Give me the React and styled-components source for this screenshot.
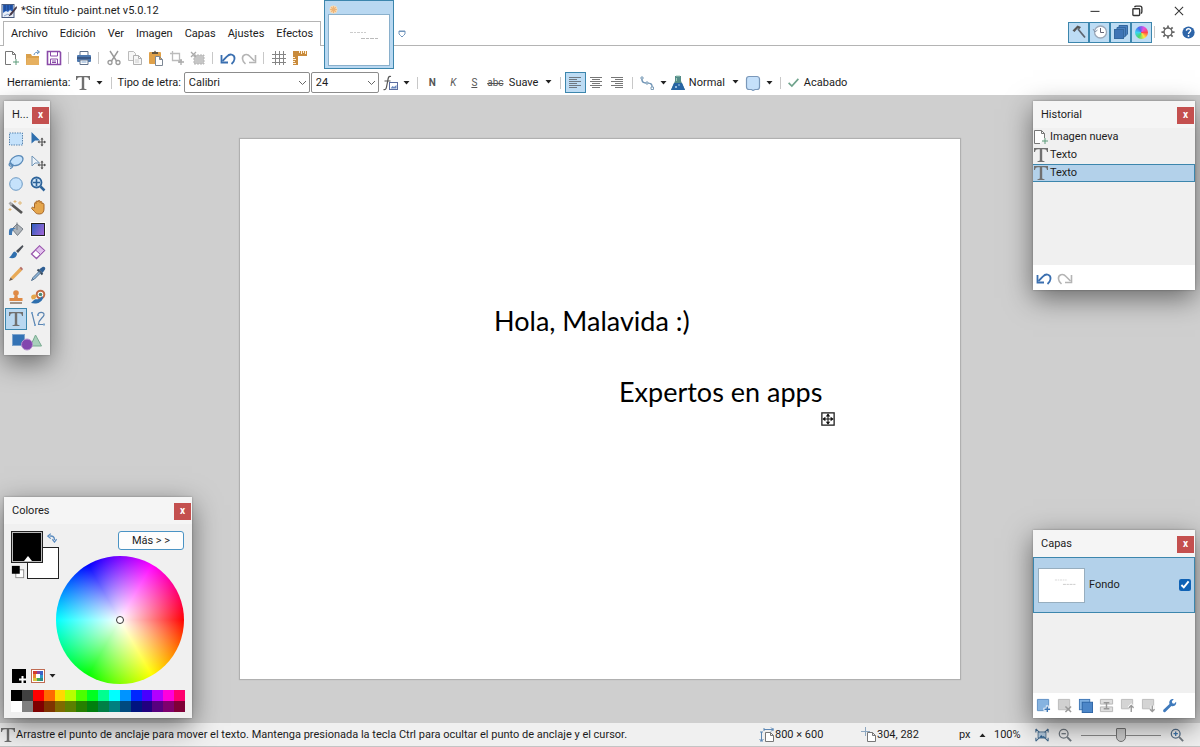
import React, { useState } from "react";
import styled, { createGlobalStyle } from "styled-components";

const GlobalStyle = createGlobalStyle`
  * {
    box-sizing: border-box;
  }
  body {
    margin: 0;
    font-family: Roboto, "Open Sans", sans-serif;
    font-size: 11px;
    line-height: 16px;
    color: #1c1c1c;
  }
  button, select, input {
    font: inherit;
    color: inherit;
    margin: 0;
  }
`;

const Icon = ({ size = 16, children }) => (
  <svg width={size} height={size} viewBox="0 0 16 16" fill="none" aria-hidden="true">
    {children}
  </svg>
);

const icons = {
  app: (
    <>
      <rect x="1" y="1.500" width="12" height="13" fill="#e8eef8" stroke="#4a5c80" />
      <path d="M2 2h10v7l-3-2-2 2-2-1-3 2z" fill="#2a60b8" />
      <path d="M4 2v6M7 2v5M10 2v4" stroke="#173e86" />
      <path d="M3 13l4-2 2 2" stroke="#8da8d0" />
      <path d="M15.500 3L9 10.500l-1.500 3 3-1.500L16 5z" fill="#46394a" />
    </>
  ),
  newFile: (
    <>
      <path d="M7 14.500H1.500v-13h7l3 3V9" fill="#fff" stroke="#777" />
      <path d="M8.500 1.500v3h3" stroke="#777" />
      <path d="M12 9v6M9 12h6" stroke="#5d9c7a" />
    </>
  ),
  open: (
    <>
      <path d="M1 4h5l1 2h7v9H1z" fill="#d9a04c" />
      <path d="M1 15l1-7h12v7z" fill="#e6b060" />
      <path d="M9 5c0-2 2-3 5-3M12 0l2.500 2L12 4" stroke="#5c8dbd" />
    </>
  ),
  save: (
    <>
      <path d="M1.500 1.500h12l1 1v12h-13z" fill="#fff" stroke="#8a4aa8" strokeWidth="1.600" />
      <path d="M4.500 2v4h7V2M4.500 14v-5h7v5M6 11h4M6 12.500h4" stroke="#8a4aa8" />
    </>
  ),
  print: (
    <>
      <path d="M4 1.500h8V6H4z" fill="#fff" stroke="#60728c" />
      <rect x="1" y="5" width="14" height="7" rx="1" fill="#4d79b0" />
      <path d="M1 8h14" stroke="#334e78" strokeWidth="1.500" />
      <path d="M4 10h8v4.500H4z" fill="#fff" stroke="#60728c" />
      <path d="M5.500 12h5" stroke="#7fa4cf" />
    </>
  ),
  cut: (
    <>
      <path d="M4 1l6.500 10M12 1L5.500 11" stroke="#999" strokeWidth="1.400" />
      <circle cx="4" cy="12.500" r="2" stroke="#999" strokeWidth="1.300" />
      <circle cx="12" cy="12.500" r="2" stroke="#999" strokeWidth="1.300" />
    </>
  ),
  copy: (
    <>
      <path d="M1.500 1.500h5l2 2v7h-7z" fill="#f7f7f7" stroke="#bbb" />
      <path d="M6.500 5.500h5l3 3v6h-8zM11.500 5.500v3h3" fill="#f7f7f7" stroke="#b0b0b0" />
      <path d="M8 10h4M8 12h4" stroke="#ccc" />
    </>
  ),
  paste: (
    <>
      <rect x="1" y="2" width="12" height="12" rx="1" fill="#dfa14a" />
      <path d="M4 4V2h2l1-1.500L8 2h2v2z" fill="#64553f" />
      <path d="M7.500 6.500h4l3 3v6h-7zM11.500 6.500v3h3" fill="#fff" stroke="#7d8794" />
    </>
  ),
  crop: (
    <>
      <path d="M3.500 1v9.500H13M1 3.500h9.500V13" stroke="#bbb" strokeWidth="1.300" />
      <path d="M12 9v6M9 12h6" stroke="#aaa" strokeWidth="1.300" />
    </>
  ),
  deselect: (
    <>
      <rect x="4" y="5" width="10" height="9" fill="#c6c6c6" stroke="#b5b5b5" strokeDasharray="2 1" />
      <path d="M1 2l5 5M6 2L1 7" stroke="#aaa" strokeWidth="1.300" />
    </>
  ),
  undo: (
    <>
      <path d="M2.500 11L7 6.500c3-3.500 8-2 7.500 2.500-.2 2-1.200 3.500-3 5" stroke="#3a6fb0" strokeWidth="1.800" />
      <path d="M1.500 5v7.500H8" stroke="#3a6fb0" strokeWidth="1.800" />
    </>
  ),
  redo: (
    <>
      <path d="M13.500 11L9 6.500C6 3 1 4.500 1.500 9c.2 2 1.200 3.500 3 5" stroke="#b4b4b4" strokeWidth="1.600" />
      <path d="M14.500 5v7.500H8" stroke="#b4b4b4" strokeWidth="1.600" />
    </>
  ),
  grid: <path d="M4.500 1v14M8.500 1v14M12.500 1v14M1 4.500h14M1 8.500h14M1 12.500h14" stroke="#858585" />,
  ruler: (
    <>
      <path d="M1 1h14v5H6v9H1z" fill="#c98b3c" />
      <path d="M7.500 1v2M9.500 1v3M11.500 1v2M13.500 1v3M1 7.500h2M1 9.500h3M1 11.500h2M1 13.500h3" stroke="#fff0d8" />
    </>
  ),
  text: (
    <path
      d="M1 1h14v4h-1c-.3-2-1-2.700-3-2.700H9.200v10.500c0 1 .4 1.300 2.300 1.400v.8h-7v-.8c1.900-.1 2.300-.4 2.300-1.400V2.300H5C3 2.300 2.300 3 2 5H1z"
      fill="#707070"
    />
  ),
  fx: (
    <>
      <path d="M9 1.500C6.500.5 6.200 3 5.700 6L4.500 12c-.5 2.500-1.500 3-3 2.500M2.500 6h6" stroke="#555" strokeWidth="1.200" />
      <rect x="7.500" y="7.500" width="8" height="7" fill="#fff" stroke="#5b6da0" />
      <path d="M8.500 13.500l2-2.500 1.500 1 2.500-2v3.500z" fill="#6987bd" />
    </>
  ),
  left: <path d="M2 2.500h12M2 4.500h8M2 6.500h12M2 8.500h8M2 10.500h12M2 12.500h8" stroke="#6f7881" />,
  center: <path d="M2 2.500h12M4 4.500h8M2 6.500h12M4 8.500h8M2 10.500h12M4 12.500h8" stroke="#777" />,
  right: <path d="M2 2.500h12M6 4.500h8M2 6.500h12M6 8.500h8M2 10.500h12M6 12.500h8" stroke="#777" />,
  curve: (
    <>
      <path d="M3 3c-1 5 3 5 5 5s6 0 5 5" stroke="#6e93b5" strokeWidth="1.200" />
      <path d="M2 2h2v2H2zM7 7h2v2H7zM12 12h2.500v2.500H12z" fill="#fff" stroke="#7d9db8" />
    </>
  ),
  flask: (
    <>
      <path d="M5 1h6v5l4 9H1l4-9z" fill="#548c88" />
      <path d="M4 8h8l3 7H1z" fill="#2865a3" />
      <path d="M6 1h4M6.500 3v3" stroke="#9cc8b8" />
      <circle cx="6" cy="12" r="1" fill="#b7d8f2" />
      <circle cx="9" cy="10" r=".8" fill="#b7d8f2" />
    </>
  ),
  shape: (
    <path
      d="M4 1.500h8c1 0 2.500 1 2.500 2.500v8c0 1-.5 2.500-2.500 2.500h-2l-2 1-1.500-1H4C2.500 14.500 1.500 13.500 1.500 12V4c0-1.500 1-2.500 2.500-2.500z"
      fill="#c5e0fa"
      stroke="#7a98ba"
      strokeWidth="1.200"
    />
  ),
  check: <path d="M2 8.500l4 4 8-9" stroke="#6fa38c" strokeWidth="2" />,
  hammer: (
    <>
      <path d="M1.500 6.500l5-5L10 3 8.500 5 6.500 4.500 3.500 8z" fill="#555" />
      <path d="M7 5l7 8.500" stroke="#5d6570" strokeWidth="1.800" />
    </>
  ),
  clock: (
    <>
      <circle cx="8.500" cy="8" r="6" fill="#fff" stroke="#9ba7b8" strokeWidth="1.300" />
      <path d="M8.500 4v4.500H12" stroke="#667" />
      <path d="M1 5l2 3 2.500-2" stroke="#8796aa" />
    </>
  ),
  layers: (
    <>
      <path d="M6 1.500h8.500V10L12 12.500V4H6z" fill="#4b80c0" stroke="#35689f" />
      <path d="M4 3.500h8.500V12L10 14V6H4z" fill="#4b80c0" stroke="#35689f" />
      <rect x="1.500" y="5.500" width="9" height="9" fill="#3f74b5" stroke="#35689f" />
    </>
  ),
  gear: (
    <>
      <circle cx="8" cy="8" r="4.500" stroke="#666" strokeWidth="1.600" />
      <path
        d="M8 .5v3M8 12.500v3M.5 8h3M12.500 8h3M2.700 2.700l2.200 2.200M11.100 11.100l2.200 2.200M13.300 2.700l-2.200 2.200M4.900 11.100l-2.200 2.200"
        stroke="#666"
        strokeWidth="2"
      />
    </>
  ),
  help: (
    <>
      <circle cx="8" cy="8" r="6.500" fill="#2d64a8" />
      <path d="M5.800 6.200c0-3 4.500-2.800 4.500-.3C10.300 7.500 8 7.500 8 9.500" stroke="#fff" strokeWidth="1.500" />
      <circle cx="8" cy="11.700" r="1" fill="#fff" />
    </>
  ),
  rectSelect: <rect x="1.500" y="2" width="13" height="12" fill="#c5e2fb" stroke="#5b86b0" strokeDasharray="1.500 1" />,
  lasso: (
    <>
      <path
        d="M4 11C0 9 3 4.500 7 2.500s8-.5 8 2.500-3.500 6-7 6.500c-1.500.2-3 .2-4-.5z"
        fill="#c5e2fb"
        stroke="#5a8ab8"
        strokeWidth="1.300"
      />
      <path d="M4 9.500c-2-1-3.500.5-2.500 2s3.500 0 3-1.500c1 2-.5 4.500-2.500 4.500" stroke="#5a8ab8" strokeWidth="1.300" />
    </>
  ),
  ellipse: <circle cx="8" cy="8" r="6.300" fill="#c5e2fb" stroke="#6c9ac4" />,
  movePixels: (
    <>
      <path d="M1.500 1v11.500L5 9.500h5z" fill="#2e6fae" />
      <path d="M12 7.500v7M8.500 11h7" stroke="#555" strokeWidth="1.200" />
      <path d="M12 6.500l1.500 2h-3zM12 15.500l1.500-2h-3zM7.500 11l2-1.500v3zM16 11l-2-1.500v3z" fill="#555" />
    </>
  ),
  moveSel: (
    <>
      <path d="M2 2v10l3-3h4.500z" fill="#eef4fa" stroke="#6e93b5" />
      <path d="M12 7.500v7M8.500 11h7" stroke="#555" strokeWidth="1.200" />
      <path d="M12 6.500l1.500 2h-3zM12 15.500l1.500-2h-3zM7.500 11l2-1.500v3zM16 11l-2-1.500v3z" fill="#555" />
    </>
  ),
  zoom: (
    <>
      <circle cx="6.500" cy="6.500" r="5" fill="#cfe4f6" stroke="#2d6399" strokeWidth="1.800" />
      <path d="M10.500 10.500l4 4" stroke="#2d6399" strokeWidth="2.500" />
      <path d="M6.500 3v7M3 6.500h7" stroke="#2d6399" strokeWidth="1.600" />
    </>
  ),
  wand: (
    <>
      <path d="M3 5l11 9" stroke="#555" strokeWidth="2.800" />
      <path d="M1.500 3.500L4 6" stroke="#aaa" strokeWidth="2.800" />
      <path d="M7 1v3M5.500 2.500h3M12 2v4M10 4h4M2 9v3M.5 10.500h3" stroke="#dfb775" />
    </>
  ),
  hand: (
    <path
      d="M4.500 9V4.500c0-1.300 1.500-1.300 1.500 0V3c0-1.500 2-1.500 2 0V2.500c0-1.500 2-1.500 2 0V3.500c0-1.300 2-1.300 2 0v1.500c.3-1 2-.8 2 .5V10c0 3-1.500 5-4.500 5S5.500 14 4.500 12.500L1.800 9.700c-.8-1 .7-2 1.600-1.300z"
      fill="#e5a64c"
      stroke="#a8692b"
    />
  ),
  bucket: (
    <>
      <path d="M4 8l5-5 6 5-5.500 6.500z" fill="#aeb4ba" stroke="#777e86" />
      <path d="M9 9V1.500" stroke="#777e86" />
      <path d="M1 14c0-4-.5-7 3-7h4c-3 1-4 3-4 7z" fill="#3e78b4" />
    </>
  ),
  brush: (
    <>
      <path d="M14.500 1L8 7l2 2 5.500-6.500z" fill="#4b5058" />
      <path d="M7 7.500c-3 .5-2.500 4-6 6 3.500 1.500 8 .5 8-4z" fill="#2f6fae" />
    </>
  ),
  eraser: (
    <>
      <path d="M1.500 10L9.500 2l5 4.500-8 8z" fill="#fff" stroke="#9a58ae" strokeWidth="1.300" />
      <path d="M5.500 6l4-4 5 4.500-4 4z" fill="#e3c2ee" stroke="#9a58ae" />
    </>
  ),
  pencil: (
    <>
      <path d="M2.500 11.500l9-9.500 2.500 2.500-9 9z" fill="#e8a956" />
      <path d="M11.500 2l1.500-1.200L15 3l-1 1.500z" fill="#b66c62" />
      <path d="M1 15l1.500-3.500L5 13.500z" fill="#6d5a48" />
    </>
  ),
  picker: (
    <>
      <path d="M9 3.500L12.500 7l2.500-3.500C16 1.500 14 0 12.500 1z" fill="#2f5f94" />
      <path d="M7.500 3.500l5 5" stroke="#36485c" strokeWidth="2" />
      <path d="M9 5.500L3 11.500 1.500 14.500l3-1.500 6-6z" fill="#8fb6da" stroke="#53718f" />
    </>
  ),
  stamp: (
    <>
      <circle cx="8" cy="4" r="2.800" fill="#df8a45" />
      <path d="M7 5h2l1 4h4.500v3h-13V9H6z" fill="#df8a45" />
      <path d="M2 14h12" stroke="#8f7b6b" strokeWidth="1.600" />
    </>
  ),
  recolor: (
    <>
      <circle cx="10.500" cy="5.500" r="3.800" fill="#fff" stroke="#c06a45" strokeWidth="2" />
      <circle cx="10.500" cy="5.500" r="1.800" fill="#4b8a77" />
      <path d="M12 7c-3 5-6 2-8 4l-3 3c4 1 10 1 12-5z" fill="#2f6fae" />
      <path d="M1 8c1-3 4-3 6-1l-2 3-3 .5z" fill="#e5a64c" />
    </>
  ),
  line: (
    <>
      <path d="M2 2l3 12" stroke="#5b84b0" strokeWidth="1.200" />
      <path d="M8 4c0-3.500 6.500-3.500 6 0-.7 3-5.500 4-5.500 9.500H15" stroke="#5b84b0" strokeWidth="1.200" />
      <path d="M1 1h2v2H1zM4 13h2v2H4zM7 3h2v2H7zM13 12.500h2v2h-2z" fill="#7fa6cc" />
    </>
  ),
  swap: (
    <>
      <path d="M4 5c5-1 8 1 8 6" stroke="#5d8dc0" strokeWidth="2.200" />
      <path d="M6 1L1.500 5 6 9M8.500 10L12 14.500 15.500 10" stroke="#5d8dc0" strokeWidth="2" />
    </>
  ),
  defaults: (
    <>
      <rect x="5.500" y="5.500" width="9" height="9" fill="#fff" stroke="#888" />
      <rect x="1" y="1" width="9" height="9" fill="#000" />
    </>
  ),
  addColor: (
    <>
      <rect x="1" y="1" width="14" height="14" fill="#000" />
      <path d="M11.500 8v7M8 11.500h7" stroke="#fff" strokeWidth="2" />
    </>
  ),
  palette: (
    <>
      <rect x="1.500" y="1.500" width="13" height="13" fill="#fff" stroke="#bf6b52" />
      <path d="M3 3h4v3H3z" fill="#d33b31" />
      <path d="M7 3h3v3H7z" fill="#8446a0" />
      <path d="M10 3h3v4h-3z" fill="#3c62c5" />
      <path d="M3 6h3v4H3z" fill="#e98832" />
      <path d="M10 7h3v3h-3z" fill="#2e9ac9" />
      <path d="M3 10h4v3H3z" fill="#d8c43d" />
      <path d="M7 10h3v3H7z" fill="#4aa655" />
      <path d="M10 10h3v3h-3z" fill="#2b8c85" />
    </>
  ),
  addLayer: (
    <>
      <path d="M1.500 1.500h12v12h-12z" fill="#86b3e0" stroke="#5d8fc3" />
      <path d="M12 8v8M8 12h8" stroke="#fff" strokeWidth="3" />
      <path d="M12 9v6M9 12h6" stroke="#3b74b3" strokeWidth="1.500" />
    </>
  ),
  delLayer: (
    <>
      <path d="M1.500 1.500h12v11h-12z" fill="#d0d0d0" stroke="#bbb" />
      <path d="M9 9l6 6M15 9l-6 6" stroke="#999" strokeWidth="1.600" />
    </>
  ),
  dupLayer: (
    <>
      <rect x="1.500" y="1.500" width="11" height="11" fill="#7fb0e2" stroke="#3c75b5" />
      <rect x="4.500" y="4.500" width="11" height="11" fill="#4c86c8" stroke="#2c64a5" />
    </>
  ),
  merge: (
    <>
      <path d="M1.500 1.500h13v5h-13zM1.500 9.500h13v5h-13z" fill="#dedede" stroke="#b5b5b5" />
      <path d="M5 5h6M8 5v6M5 11.500h6" stroke="#999" strokeWidth="1.500" />
    </>
  ),
  up: (
    <>
      <path d="M1.500 1.500h12v10h-12z" fill="#d4d4d4" stroke="#bbb" />
      <path d="M12 15V8M9.500 10.500L12 8l2.500 2.500" stroke="#fff" strokeWidth="3.500" />
      <path d="M12 15V8M9.500 10.500L12 8l2.500 2.500" stroke="#999" strokeWidth="1.500" />
    </>
  ),
  down: (
    <>
      <path d="M1.500 1.500h12v10h-12z" fill="#d4d4d4" stroke="#bbb" />
      <path d="M12 8v7M9.500 12L12 14.500l2.500-2.500" stroke="#fff" strokeWidth="3.500" />
      <path d="M12 8v7M9.500 12L12 14.500l2.500-2.500" stroke="#999" strokeWidth="1.500" />
    </>
  ),
  wrench: (
    <path
      d="M1.500 12.500L8 6.500C7 3 9.500.5 12.500 1.200L10.500 3.500l.5 2 2 .5L15 4c.8 3-1.700 5.500-5 4.500l-6.500 6.500c-1.500 1-3-1-2-2.500z"
      fill="#3f7abc"
    />
  ),
  size: (
    <>
      <path d="M6.500 5.500h5l3 3v6h-8zM11.500 5.500v3h3" fill="#fff" stroke="#777" />
      <path d="M5 2.500h9M5 1v3M14 1v3M2.500 5v9M1 5h3M1 14h3" stroke="#5d88b5" />
      <path d="M12 .5l2 2-2 2M.5 12l2 2 2-2" stroke="#5d88b5" />
    </>
  ),
  position: (
    <>
      <path d="M6.500 5.500h5l3 3v6h-8zM11.500 5.500v3h3" fill="#fff" stroke="#777" />
      <path d="M4.500 0v9M0 4.500h9" stroke="#8da7c0" />
    </>
  ),
  fit: (
    <>
      <path d="M3.500 4.500h9v7h-9z" fill="#b4cbe0" stroke="#4f7190" />
      <path d="M1 1l4 4M15 1l-4 4M1 15l4-4M15 15l-4-4M1 1v4M1 11v4M15 1v4M15 11v4" stroke="#41688c" strokeWidth="1.200" />
      <path d="M5 11l2-3 2 2 1-1 2 2z" fill="#2c5f8e" />
    </>
  ),
  zoomOut: (
    <>
      <circle cx="6.500" cy="6.500" r="5" stroke="#727a82" strokeWidth="1.500" />
      <path d="M10.500 10.500l4.500 4.500" stroke="#727a82" strokeWidth="2.200" />
      <path d="M4 6.500h5" stroke="#727a82" strokeWidth="1.500" />
    </>
  ),
  zoomIn: (
    <>
      <circle cx="6.500" cy="6.500" r="5" stroke="#56718c" strokeWidth="1.500" />
      <path d="M10.500 10.500l4.500 4.500" stroke="#727a82" strokeWidth="2.200" />
      <path d="M4 6.500h5M6.500 4v5" stroke="#3f78b0" strokeWidth="1.500" />
    </>
  ),
};

const Caret = ({ up }) => (
  <svg width="7" height="4" viewBox="0 0 7 4" aria-hidden="true">
    <path d={up ? "M.5 4h6L3.500.5z" : "M.5 0h6L3.500 3.500z"} fill="#222" />
  </svg>
);

const menus = ["Archivo", "Edición", "Ver", "Imagen", "Capas", "Ajustes", "Efectos"];

const fileTools = [
  ["newFile", "Nuevo"],
  ["open", "Abrir"],
  ["save", "Guardar"],
  null,
  ["print", "Imprimir"],
  null,
  ["cut", "Cortar"],
  ["copy", "Copiar"],
  ["paste", "Pegar"],
  ["crop", "Recortar"],
  ["deselect", "Anular selección"],
  null,
  ["undo", "Deshacer"],
  ["redo", "Rehacer"],
  null,
  ["grid", "Cuadrícula"],
  ["ruler", "Reglas"],
];

const tools = [
  ["rectSelect", "Selección de rectángulo"],
  ["movePixels", "Mover píxeles"],
  ["lasso", "Lazo"],
  ["moveSel", "Mover selección"],
  ["ellipse", "Selección de elipse"],
  ["zoom", "Zoom"],
  ["wand", "Varita mágica"],
  ["hand", "Panorámica"],
  ["bucket", "Bote de pintura"],
  ["gradient", "Degradado"],
  ["brush", "Pincel"],
  ["eraser", "Borrador"],
  ["pencil", "Lápiz"],
  ["picker", "Selector de color"],
  ["stamp", "Clonar"],
  ["recolor", "Volver a colorear"],
  ["text", "Texto"],
  ["line", "Línea / Curva"],
];

const layerTools = [
  ["addLayer", "Agregar capa"],
  ["delLayer", "Eliminar capa"],
  ["dupLayer", "Duplicar capa"],
  ["merge", "Combinar capa"],
  ["up", "Subir capa"],
  ["down", "Bajar capa"],
  ["wrench", "Propiedades"],
];

const swatches = [
  "#000000", "#404040", "#ff0000", "#ff6a00", "#ffd800", "#b6ff00", "#4cff00", "#00ff21",
  "#00ff90", "#00ffff", "#0094ff", "#0026ff", "#4800ff", "#b200ff", "#ff00dc", "#ff006e",
  "#ffffff", "#808080", "#7f0000", "#7f3300", "#7f6a00", "#5b7f00", "#267f00", "#007f0e",
  "#007f46", "#007f7f", "#004a7f", "#00137f", "#21007f", "#57007f", "#7f006e", "#7f0037",
];

const App = () => {
  const [tool, setTool] = useState("text");
  const [zoom, setZoom] = useState(50);

  return (
    <Shell>
      <GlobalStyle />
      <Header>
        <TitleBar>
          <Icon>{icons.app}</Icon>
          <Title>*Sin título - paint.net v5.0.12</Title>
          <WindowButton aria-label="Minimizar">
            <Icon size={12}>
              <path d="M2 8.500h12" stroke="#333" strokeWidth="1.400" />
            </Icon>
          </WindowButton>
          <WindowButton aria-label="Restaurar">
            <Icon size={12}>
              <rect x="2.500" y="5" width="9" height="9" rx="1" stroke="#333" strokeWidth="1.800" />
              <path d="M5 3c0-1 1-1.500 2-1.500h5c1.500 0 2.500 1 2.500 2.500v5c0 1-.5 2-1.500 2" stroke="#333" strokeWidth="1.800" />
            </Icon>
          </WindowButton>
          <WindowButton aria-label="Cerrar">
            <Icon size={12}>
              <path d="M2.500 2.500l11 11M13.500 2.500l-11 11" stroke="#333" strokeWidth="1.400" />
            </Icon>
          </WindowButton>
        </TitleBar>
        <MenuRow>
          <Menu>
            {menus.map((item) => (
              <MenuButton key={item}>{item}</MenuButton>
            ))}
          </Menu>
          <PanelToggles>
            <Toggle $on aria-label="Herramientas">
              <Icon>{icons.hammer}</Icon>
            </Toggle>
            <Toggle $on aria-label="Historial">
              <Icon>{icons.clock}</Icon>
            </Toggle>
            <Toggle $on aria-label="Capas">
              <Icon>{icons.layers}</Icon>
            </Toggle>
            <Toggle $on aria-label="Colores">
              <MiniWheel />
            </Toggle>
            <Separator $gap={2} />
            <ToolButton aria-label="Configuración">
              <Icon size={14}>{icons.gear}</Icon>
            </ToolButton>
            <ToolButton aria-label="Ayuda">
              <Icon size={15}>{icons.help}</Icon>
            </ToolButton>
          </PanelToggles>
        </MenuRow>
        <DocumentTab aria-label="Sin título">
          <TabStar aria-hidden="true">
            <Icon size={9}>
              <circle cx="8" cy="8" r="7" fill="#f6dcb8" />
              <path d="M8 2v12M2 8h12M4 4l8 8M12 4l-8 8" stroke="#eeb477" strokeWidth="2" />
            </Icon>
          </TabStar>
          <Thumb>
            <Preview />
          </Thumb>
        </DocumentTab>
        <TabList aria-label="Lista de imágenes">
          <Icon size={8}>
            <path d="M2 2h12v6l-3 3-3 3-3-3-3-3z" fill="#fff" stroke="#7195bc" strokeWidth="2" />
            <path d="M2 3h12" stroke="#7195bc" strokeWidth="2" />
          </Icon>
        </TabList>

        <Toolbar>
          {fileTools.map((item, i) =>
            item ? (
              <ToolButton key={item[0]} aria-label={item[1]}>
                <Icon>{icons[item[0]]}</Icon>
              </ToolButton>
            ) : (
              <Separator key={i} />
            )
          )}
        </Toolbar>

        <Options>
          <Label as="span">Herramienta:</Label>
          <DropButton aria-label="Elegir herramienta">
            <Icon>{icons.text}</Icon>
            <Caret />
          </DropButton>
          <Separator $gap={5} />
          <Label htmlFor="font">Tipo de letra:</Label>
          <SelectBox $width={126}>
            <select id="font" defaultValue="Calibri">
              <option>Calibri</option>
            </select>
            <Chevron />
          </SelectBox>
          <SelectBox $width={68}>
            <select aria-label="Tamaño" defaultValue="24">
              <option>24</option>
            </select>
            <Chevron />
          </SelectBox>
          <DropButton aria-label="Métricas de fuente">
            <Icon>{icons.fx}</Icon>
            <Caret />
          </DropButton>
          <Separator />
          <Format $weight="700">N</Format>
          <Format $slant>K</Format>
          <Format $line="underline">S</Format>
          <Format $line="line-through">abc</Format>
          <PlainSelect $width={49}>
            <select aria-label="Suavizado" defaultValue="Suave">
              <option>Suave</option>
            </select>
            <Caret />
          </PlainSelect>
          <Separator />
          <Toggle $on aria-label="Alinear a la izquierda">
            <Icon>{icons.left}</Icon>
          </Toggle>
          <ToolButton aria-label="Centrar">
            <Icon>{icons.center}</Icon>
          </ToolButton>
          <ToolButton aria-label="Alinear a la derecha">
            <Icon>{icons.right}</Icon>
          </ToolButton>
          <Separator />
          <DropButton aria-label="Muestreo">
            <Icon>{icons.curve}</Icon>
            <Caret />
          </DropButton>
          <Icon>{icons.flask}</Icon>
          <PlainSelect $width={56}>
            <select aria-label="Modo de mezcla" defaultValue="Normal">
              <option>Normal</option>
            </select>
            <Caret />
          </PlainSelect>
          <DropButton aria-label="Recorte de selección">
            <Icon>{icons.shape}</Icon>
            <Caret />
          </DropButton>
          <Separator />
          <Finish>
            <Icon size={13}>{icons.check}</Icon>
            Acabado
          </Finish>
        </Options>
      </Header>

      <Workspace>
        <Canvas>
          <CanvasText $left={254} $top={166}>Hola, Malavida :)</CanvasText>
          <CanvasText $left={379} $top={237}>Expertos en apps</CanvasText>
          <Handle>
            <Icon size={14}>
              <rect x="1" y="1" width="14" height="14" fill="#fff" stroke="#222" strokeWidth="1.500" />
              <path d="M8 3v10M3 8h10" stroke="#111" strokeWidth="1.200" />
              <path d="M8 1.500L10.500 5h-5zM8 14.500L10.500 11h-5zM1.500 8L5 5.500v5zM14.500 8L11 5.500v5z" fill="#111" />
            </Icon>
          </Handle>
        </Canvas>

        <ToolsPanel>
          <PanelHeader>
            <PanelTitle>H...</PanelTitle>
            <Close aria-label="Cerrar herramientas">x</Close>
          </PanelHeader>
          <ToolGrid>
            {tools.map(([name, label]) => (
              <ToolCell key={name} $on={tool === name} aria-label={label} onClick={() => setTool(name)}>
                {name === "gradient" ? <GradientIcon /> : <Icon>{icons[name]}</Icon>}
              </ToolCell>
            ))}
            <ShapesCell aria-label="Formas">
              <svg width="32" height="18" viewBox="0 0 32 18" aria-hidden="true">
                <rect x="1.500" y="1.500" width="12" height="11" fill="#3473b5" stroke="#7ea4cc" />
                <path d="M24.500 2l6 11h-11z" fill="#a8d0ba" stroke="#78ab90" />
                <circle cx="16" cy="11.500" r="5.500" fill="#8246ae" stroke="#b493cc" />
              </svg>
            </ShapesCell>
          </ToolGrid>
        </ToolsPanel>

        <ColorsPanel>
          <PanelHeader>
            <PanelTitle>Colores</PanelTitle>
            <Close aria-label="Cerrar colores">x</Close>
          </PanelHeader>
          <ColorsBody>
            <ColorSide>
              <SwatchPair>
                <Secondary aria-label="Color secundario" />
                <Primary aria-label="Color primario" />
                <SwapButton aria-label="Intercambiar colores">
                  <Icon size={10}>{icons.swap}</Icon>
                </SwapButton>
                <ResetButton aria-label="Colores predeterminados">
                  <Icon size={14}>{icons.defaults}</Icon>
                </ResetButton>
              </SwatchPair>
              <PaletteTools>
                <Bare aria-label="Agregar color">
                  <Icon>{icons.addColor}</Icon>
                </Bare>
                <Bare aria-label="Paleta">
                  <Icon>{icons.palette}</Icon>
                </Bare>
                <Caret />
              </PaletteTools>
            </ColorSide>
            <ColorMain>
              <More>Más &gt; &gt;</More>
              <Wheel>
                <Picker />
              </Wheel>
            </ColorMain>
          </ColorsBody>
          <Palette>
            {swatches.map((color) => (
              <Swatch key={color} $color={color} aria-label={color} />
            ))}
          </Palette>
        </ColorsPanel>

        <HistoryPanel>
          <PanelHeader>
            <PanelTitle>Historial</PanelTitle>
            <Close aria-label="Cerrar historial">x</Close>
          </PanelHeader>
          <HistoryList>
            <HistoryItem>
              <Icon>{icons.newFile}</Icon>
              Imagen nueva
            </HistoryItem>
            <HistoryItem>
              <Icon>{icons.text}</Icon>
              Texto
            </HistoryItem>
            <HistoryItem $on>
              <Icon>{icons.text}</Icon>
              Texto
            </HistoryItem>
          </HistoryList>
          <PanelFooter>
            <ToolButton aria-label="Deshacer">
              <Icon>{icons.undo}</Icon>
            </ToolButton>
            <ToolButton aria-label="Rehacer">
              <Icon>{icons.redo}</Icon>
            </ToolButton>
          </PanelFooter>
        </HistoryPanel>

        <LayersPanel>
          <PanelHeader>
            <PanelTitle>Capas</PanelTitle>
            <Close aria-label="Cerrar capas">x</Close>
          </PanelHeader>
          <Layer>
            <LayerThumb>
              <Preview />
            </LayerThumb>
            <LayerName>Fondo</LayerName>
            <LayerCheck type="checkbox" defaultChecked />
          </Layer>
          <LayerSpace />
          <PanelFooter>
            {layerTools.map(([name, label]) => (
              <ToolButton key={name} aria-label={label}>
                <Icon size={15}>{icons[name]}</Icon>
              </ToolButton>
            ))}
          </PanelFooter>
        </LayersPanel>
      </Workspace>

      <StatusBar>
        <Icon>{icons.text}</Icon>
        <Hint>
          Arrastre el punto de anclaje para mover el texto. Mantenga presionada la tecla Ctrl para ocultar el punto de
          anclaje y el cursor.
        </Hint>
        <Stat $width={102}>
          <Icon>{icons.size}</Icon>
          800 × 600
        </Stat>
        <Stat $width={98}>
          <Icon>{icons.position}</Icon>
          304, 282
        </Stat>
        <Units>
          px
          <Caret up />
        </Units>
        <Percent>100%</Percent>
        <ZoomTools>
          <Bare aria-label="Ajustar a la ventana">
            <Icon size={14}>{icons.fit}</Icon>
          </Bare>
          <Bare aria-label="Alejar">
            <Icon size={14}>{icons.zoomOut}</Icon>
          </Bare>
          <Slider
            type="range"
            min="0"
            max="100"
            aria-label="Zoom"
            value={zoom}
            onChange={(e) => setZoom(Number(e.target.value))}
          />
          <Bare aria-label="Acercar">
            <Icon size={14}>{icons.zoomIn}</Icon>
          </Bare>
        </ZoomTools>
      </StatusBar>
    </Shell>
  );
};

const Chevron = () => (
  <svg width="9" height="6" viewBox="0 0 9 6" fill="none" aria-hidden="true">
    <path d="M1 1l3.500 3.500L8 1" stroke="#666" />
  </svg>
);

const Preview = () => (
  <svg width="100%" height="100%" viewBox="0 0 60 45" aria-hidden="true">
    <path d="M21 15h16" stroke="#ccc" strokeDasharray="3 1 2 1" />
    <path d="M32 21h17" stroke="#bbb" strokeDasharray="4 1 3 1" />
  </svg>
);

const Shell = styled.div`
  display: flex;
  flex-direction: column;
  height: 100vh;
  overflow: hidden;
  background: #fff;
`;

const Header = styled.header`
  position: relative;
  flex: none;
`;

const TitleBar = styled.div`
  display: flex;
  align-items: center;
  height: 21px;
  padding-left: 1px;
`;

const Title = styled.h1`
  flex: 1;
  margin: 0 0 0 4px;
  font-size: 11px;
  font-weight: 400;
`;

const Bare = styled.button`
  display: flex;
  padding: 0;
  border: 0;
  background: none;
`;

const WindowButton = styled(Bare)`
  justify-content: center;
  width: 42px;
`;

const MenuRow = styled.div`
  display: flex;
  height: 25px;
  padding-left: 3px;
  border-bottom: 1px solid #b4b4b4;
`;

const Menu = styled.nav`
  display: flex;
  width: 318px;
  height: 25px;
  padding-left: 1px;
  background: #fff;
  border: 1px solid #b4b4b4;
  border-bottom: 0;
`;

const MenuButton = styled.button`
  padding: 0 6px;
  border: 0;
  background: none;
`;

const PanelToggles = styled.div`
  display: flex;
  align-items: center;
  margin-left: auto;
  height: 22px;
  padding-right: 1px;
`;

const ToolButton = styled.button`
  display: flex;
  align-items: center;
  justify-content: center;
  width: 21px;
  height: 21px;
  padding: 0;
  border: 0;
  background: none;
`;

const Toggle = styled(ToolButton)`
  background: ${({ $on }) => ($on ? "#bddcf4" : "none")};
  border: 1px solid ${({ $on }) => ($on ? "#3c86ad" : "transparent")};
`;

const hues = "#ff4a4a, #ffe640, #4ad66a, #38d3ee, #4a68f0, #e650e0, #ff4a4a";

const MiniWheel = styled.span`
  width: 13px;
  height: 13px;
  border-radius: 50%;
  background: conic-gradient(from 90deg, ${hues});
`;

const Separator = styled.span`
  flex: none;
  width: 1px;
  height: 12px;
  margin: 0 ${({ $gap = 4 }) => $gap}px;
  background: #c8c8c8;
`;

const DocumentTab = styled.button`
  position: absolute;
  top: 0;
  left: 324px;
  display: flex;
  flex-direction: column;
  width: 70px;
  height: 69px;
  padding: 4px 3px 3px;
  border: 1px solid #3c86ad;
  background: #b9d8f1;
`;

const TabStar = styled.span`
  display: flex;
  height: 15px;
  padding-left: 1px;
`;

const Thumb = styled.span`
  flex: 1;
  width: 100%;
  background: #fff;
  border: 1px solid #8ab0cc;
`;

const TabList = styled(Bare)`
  position: absolute;
  top: 30px;
  left: 398px;
`;

const Toolbar = styled.div`
  display: flex;
  align-items: center;
  height: 24px;
  padding-left: 1px;
`;

const Options = styled.div`
  display: flex;
  align-items: center;
  height: 25px;
  padding-left: 7px;
`;

const Label = styled.label`
  margin-right: 3px;
  white-space: nowrap;
`;

const DropButton = styled.button`
  display: flex;
  align-items: center;
  gap: 5px;
  height: 21px;
  padding: 0 3px 0 2px;
  border: 0;
  background: none;
`;

const SelectBox = styled.span`
  position: relative;
  width: ${({ $width }) => $width}px;
  height: 21px;
  margin-right: 1px;
  select {
    width: 100%;
    height: 100%;
    padding: 0 4px;
    appearance: none;
    border: 1px solid #8c8c8c;
    border-radius: 2px;
    background: #fff;
  }
  svg {
    position: absolute;
    top: 8px;
    right: 3px;
    pointer-events: none;
  }
`;

const PlainSelect = styled(SelectBox)`
  select {
    border: 0;
    padding: 0 3px;
  }
`;

const Format = styled(ToolButton)`
  font-size: 10px;
  color: #555;
  font-weight: ${({ $weight }) => $weight || 400};
  font-style: ${({ $slant }) => ($slant ? "italic" : "normal")};
  text-decoration: ${({ $line }) => $line || "none"};
`;

const Finish = styled.button`
  display: flex;
  align-items: center;
  gap: 4px;
  padding: 0 2px;
  border: 0;
  background: none;
`;

const Workspace = styled.main`
  position: relative;
  z-index: 1;
  flex: 1;
  display: flex;
  align-items: center;
  justify-content: center;
  background: #cfcfcf;
`;

const Canvas = styled.div`
  position: relative;
  width: 60%;
  aspect-ratio: 4 / 3;
  background: #fff;
  box-shadow: 0 0 1px 1px rgba(0, 0, 0, 0.15);
`;

const CanvasText = styled.p`
  position: absolute;
  left: ${({ $left }) => $left}px;
  top: ${({ $top }) => $top}px;
  margin: 0;
  font-family: Lato, "Open Sans", sans-serif;
  font-size: 27px;
  line-height: 32px;
  color: #000;
  white-space: nowrap;
`;

const Handle = styled.span`
  position: absolute;
  left: 581px;
  top: 273px;
  display: flex;
`;

const Panel = styled.section`
  position: absolute;
  display: flex;
  flex-direction: column;
  background: #f0f0f0;
  box-shadow: 0 8px 26px rgba(0, 0, 0, 0.5), 0 0 2px rgba(0, 0, 0, 0.3);
`;

const ToolsPanel = styled(Panel)`
  top: 6px;
  left: 4px;
  width: 46px;
`;

const ColorsPanel = styled(Panel)`
  bottom: 5px;
  left: 4px;
  width: 188px;
`;

const HistoryPanel = styled(Panel)`
  top: 6px;
  right: 5px;
  width: 162px;
  height: 189px;
`;

const LayersPanel = styled(Panel)`
  bottom: 5px;
  right: 5px;
  width: 162px;
  height: 188px;
`;

const PanelHeader = styled.div`
  display: flex;
  align-items: center;
  height: 27px;
  padding: 0 1px 0 8px;
  background: #f5f5f5;
`;

const PanelTitle = styled.h2`
  flex: 1;
  margin: 0;
  font-size: 11px;
  font-weight: 400;
`;

const Close = styled.button`
  align-self: flex-end;
  width: 17px;
  height: 17px;
  margin-bottom: 4px;
  padding: 0 0 2px;
  border: 0;
  background: #c4504f;
  color: #fff;
  font-size: 10px;
  font-weight: 700;
  line-height: 14px;
`;

const ToolGrid = styled.div`
  display: grid;
  grid-template-columns: 1fr 1fr;
  padding: 0 1px 2px;
`;

const ToolCell = styled.button`
  display: flex;
  align-items: center;
  justify-content: center;
  height: 23px;
  padding: 0;
  border: 1px solid ${({ $on }) => ($on ? "#3c86ad" : "transparent")};
  background: ${({ $on }) => ($on ? "#b9d8f1" : "none")};
  &:nth-child(4n + 1),
  &:nth-child(4n + 2) {
    height: 22px;
  }
`;

const ShapesCell = styled(ToolCell)`
  grid-column: span 2;
`;

const GradientIcon = styled.span`
  width: 14px;
  height: 13px;
  border: 1px solid #222;
  outline: 1px solid #fff;
  background: linear-gradient(120deg, #2e5fc0, #a468d8);
`;

const ColorsBody = styled.div`
  display: flex;
  padding: 7px 8px 0 7px;
`;

const ColorSide = styled.div`
  flex: 1;
  display: flex;
  flex-direction: column;
  justify-content: space-between;
`;

const SwatchPair = styled.div`
  position: relative;
  height: 48px;
`;

const Primary = styled.button`
  position: absolute;
  top: 0;
  left: 0;
  width: 32px;
  height: 32px;
  padding: 0;
  border: 1px solid #222;
  background: #000;
  box-shadow: inset 0 0 0 1px #bbb;
  &::after {
    content: "";
    position: absolute;
    bottom: 1px;
    left: 12px;
    border: 4px solid transparent;
    border-top: 0;
    border-bottom: 5px solid #fff;
  }
`;

const Secondary = styled(Primary)`
  top: 16px;
  left: 16px;
  background: #fff;
  box-shadow: none;
  &::after {
    display: none;
  }
`;

const SwapButton = styled(Bare)`
  position: absolute;
  top: 2px;
  left: 36px;
`;

const ResetButton = styled(Bare)`
  position: absolute;
  top: 34px;
  left: 0;
`;

const PaletteTools = styled.div`
  display: flex;
  align-items: center;
  gap: 3px;
`;

const ColorMain = styled.div`
  display: flex;
  flex-direction: column;
  align-items: flex-end;
  gap: 6px;
`;

const More = styled.button`
  width: 66px;
  height: 19px;
  padding: 0;
  border: 1px solid #4a93c4;
  border-radius: 3px;
  background: #fdfdfd;
`;

const Wheel = styled.div`
  display: flex;
  align-items: center;
  justify-content: center;
  width: 128px;
  height: 128px;
  border-radius: 50%;
  background: radial-gradient(closest-side, #fff, rgba(255, 255, 255, 0)),
    conic-gradient(from 90deg, #f00, #ff0, #0f0, #0ff, #00f, #f0f, #f00);
`;

const Picker = styled.span`
  width: 8px;
  height: 8px;
  border: 1px solid #333;
  border-radius: 50%;
  background: #fff;
`;

const Palette = styled.div`
  display: grid;
  grid-template-columns: repeat(16, 1fr);
  padding: 6px 7px;
`;

const Swatch = styled.button`
  height: 11px;
  padding: 0;
  border: 0;
  background: ${({ $color }) => $color};
`;

const HistoryList = styled.ul`
  flex: 1;
  margin: 0;
  padding: 0;
  list-style: none;
`;

const HistoryItem = styled.li`
  display: flex;
  align-items: center;
  gap: 1px;
  height: 18px;
  border: 1px solid ${({ $on }) => ($on ? "#3c86ad" : "transparent")};
  border-left: 0;
  line-height: 18px;
  background: ${({ $on }) => ($on ? "#b3d1ea" : "none")};
`;

const PanelFooter = styled.div`
  display: flex;
  align-items: center;
  height: 25px;
  background: #fff;
`;

const Layer = styled.label`
  display: flex;
  align-items: center;
  height: 56px;
  padding: 0 3px 0 4px;
  border: 1px solid #3c86ad;
  background: #b3d1ea;
`;

const LayerThumb = styled.span`
  width: 47px;
  height: 35px;
  background: #fff;
  border: 1px solid #97aebf;
`;

const LayerName = styled.span`
  flex: 1;
  margin-left: 4px;
`;

const LayerCheck = styled.input`
  width: 12px;
  height: 12px;
  accent-color: #0f62b5;
`;

const LayerSpace = styled.div`
  flex: 1;
`;

const StatusBar = styled.footer`
  flex: none;
  display: flex;
  align-items: center;
  height: 24px;
  padding: 1px 16px 0 0;
  background: #f0f0f0;
  border-bottom: 1px solid #c4c4c4;
`;

const Hint = styled.span`
  flex: 1;
  white-space: nowrap;
`;

const Stat = styled.span`
  display: flex;
  align-items: center;
  width: ${({ $width }) => $width}px;
`;

const Units = styled(Bare)`
  align-items: center;
  gap: 8px;
  width: 35px;
`;

const Percent = styled.span`
  width: 41px;
`;

const ZoomTools = styled.div`
  display: flex;
  align-items: center;
  gap: 9px;
`;

const Slider = styled.input`
  width: 80px;
  height: 16px;
  appearance: none;
  background: linear-gradient(#8a8a8a, #8a8a8a) center / 100% 1px no-repeat;
  &::-webkit-slider-thumb {
    appearance: none;
    width: 10px;
    height: 14px;
    border: 1px solid #777;
    border-radius: 1px 1px 5px 5px;
    background: #cfcfcf;
  }
`;

export default App;
